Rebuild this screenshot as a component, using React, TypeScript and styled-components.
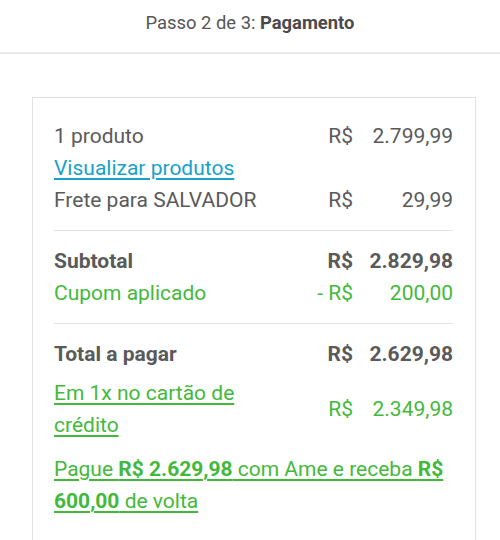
import styled, { createGlobalStyle } from "styled-components"

const GlobalStyle = createGlobalStyle`
	html, body {
		margin: 0;
		padding: 0;
		background: #ffffff;
		font-family: Roboto, "Noto Sans", Arial, sans-serif;
	}
`

type Tone = 'gray' | 'green'

const colors: Record<Tone, string> = {
	gray: '#5a5a5a',
	green: '#43b93b'
}

function App() {
	return (
		<>
			<GlobalStyle />
			<Header>
				<Step>Passo 2 de 3: <b>Pagamento</b></Step>
			</Header>
			<Body>
				<Card>
					<Row>
						<Label>1 produto</Label>
						<Currency>R$</Currency>
						<Value>2.799,99</Value>
					</Row>
					<LinkRow href="#">Visualizar produtos</LinkRow>
					<Row>
						<Label>Frete para SALVADOR</Label>
						<Currency>R$</Currency>
						<Value>29,99</Value>
					</Row>

					<Divider />

					<Row $bold>
						<Label>Subtotal</Label>
						<Currency>R$</Currency>
						<Value>2.829,98</Value>
					</Row>
					<Row $tone="green">
						<Label>Cupom aplicado</Label>
						<Currency>- R$</Currency>
						<Value>200,00</Value>
					</Row>

					<Divider />

					<Row $bold>
						<Label>Total a pagar</Label>
						<Currency>R$</Currency>
						<Value>2.629,98</Value>
					</Row>
					<Row $tone="green" $gap={7}>
						<Label $narrow><u>Em 1x no cartão de crédito</u></Label>
						<Currency>R$</Currency>
						<Value>2.349,98</Value>
					</Row>

					<Promo href="#">
						Pague <b>R$ 2.629,98</b> com Ame e receba <b>R$ 600,00</b> de volta
					</Promo>
				</Card>
			</Body>
		</>
	)
}

const Header = styled.header`
	display: flex;
	justify-content: center;
	align-items: center;
	height: 44px;
	border-bottom: 2px solid #e8e8e8;
	padding-bottom: 8px;
`

const Step = styled.span`
	font-size: 18.4px;
	color: #555555;
	b {
		font-weight: 700;
		color: #4a4a4a;
	}
`

const Body = styled.main`
	padding: 43px 24px 0 32px;
`

const Card = styled.section`
	display: flex;
	flex-direction: column;
	border: 1.5px solid #e2e2e2;
	border-bottom: none;
	padding: 22px 22px 30px 21px;
	font-size: 21px;
	line-height: 32px;
`

const Row = styled.div<{ $tone?: Tone, $bold?: boolean, $gap?: number }>`
	display: grid;
	grid-template-columns: 1fr auto 100px;
	align-items: center;
	margin-top: ${p => p.$gap ?? 0}px;
	color: ${p => colors[p.$tone ?? 'gray']};
	font-weight: ${p => p.$bold ? 700 : 400};
`

const Label = styled.span<{ $narrow?: boolean }>`
	max-width: ${p => p.$narrow ? '200px' : 'none'};
	u {
		text-decoration-thickness: 1.5px;
		text-underline-offset: 3px;
	}
`

const Currency = styled.span`
	text-align: right;
`

const Value = styled.span`
	text-align: right;
`

const LinkRow = styled.a`
	align-self: flex-start;
	color: #18a2c9;
	text-decoration: underline;
	text-decoration-thickness: 1.5px;
	text-underline-offset: 3px;
`

const Divider = styled.hr`
	width: 100%;
	border: none;
	border-top: 1.5px solid #e3e3e3;
	margin: 14px 0 14px;
`

const Promo = styled.a`
	margin-top: 12px;
	color: ${colors.green};
	text-decoration: underline;
	text-decoration-thickness: 1.5px;
	text-underline-offset: 3px;
	b {
		font-weight: 700;
	}
`

export default App
